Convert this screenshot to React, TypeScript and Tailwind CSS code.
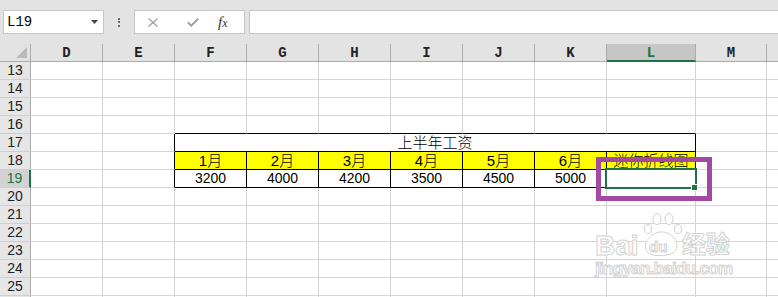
import React from 'react';
import clsx from 'clsx';

const COLS = ['D', 'E', 'F', 'G', 'H', 'I', 'J', 'K', 'L', 'M'] as const;
type Col = (typeof COLS)[number];
const W: Record<Col, string> = {
  D: 'w-[72px]',
  E: 'w-[72px]',
  F: 'w-[72px]',
  G: 'w-[72px]',
  H: 'w-[72px]',
  I: 'w-[72px]',
  J: 'w-[72px]',
  K: 'w-[72px]',
  L: 'w-[89px]',
  M: 'w-[71px]',
};
const TABLE: Col[] = ['F', 'G', 'H', 'I', 'J', 'K', 'L'];
const MONTHS: Partial<Record<Col, string>> = {
  F: '1月',
  G: '2月',
  H: '3月',
  I: '4月',
  J: '5月',
  K: '6月',
  L: '迷你折线图',
};
const VALUES: Partial<Record<Col, string>> = {
  F: '3200',
  G: '4000',
  H: '4200',
  I: '3500',
  J: '4500',
  K: '5000',
};
const ROWS = [13, 14, 15, 16, 17, 18, 19, 20, 21, 22, 23, 24, 25, 26];

function Cell({ r, c }: { r: number; c: Col }) {
  const inT = TABLE.includes(c);
  const rightBlack = (r >= 17 && r <= 19 && c === 'E') || (r >= 18 && r <= 19 && inT);
  const bottomBlack = r >= 16 && r <= 19 && inT;
  const yellow = r === 18 && inT;
  const text = r === 18 ? MONTHS[c] : r === 19 ? VALUES[c] : undefined;
  return (
    <div
      className={clsx(
        'flex h-[18px] shrink-0 items-center justify-center overflow-visible whitespace-nowrap border-r border-b text-black',
        W[c],
        rightBlack ? 'border-r-black' : 'border-r-[#d4d4d4]',
        bottomBlack ? 'border-b-black' : 'border-b-[#d4d4d4]',
        yellow ? 'bg-[#ffff00]' : 'bg-white',
        r === 18 ? 'text-[15px] font-light leading-[17px]' : 'text-[14px] leading-[17px]'
      )}
    >
      {text}
    </div>
  );
}

function RowHead({ r }: { r: number }) {
  const sel = r === 19;
  return (
    <div
      className={clsx(
        "flex h-[18px] w-[31px] shrink-0 items-center justify-center border-b border-b-[#cfcfcf] font-['Liberation_Sans',sans-serif] text-[14px] leading-[17px]",
        sel
          ? 'border-r-2 border-r-[#217346] bg-[#d2d2d2] text-[#217346]'
          : 'border-r border-r-[#ababab] bg-[#e6e6e6] text-[#222]'
      )}
    >
      {r < 26 ? r : ''}
    </div>
  );
}

function Row({ r }: { r: number }) {
  if (r === 17) {
    return (
      <div className="flex">
        <RowHead r={r} />
        <Cell r={r} c="D" />
        <Cell r={r} c="E" />
        <div className="flex h-[18px] w-[521px] shrink-0 items-center justify-center border-r border-b border-r-black border-b-black bg-white text-[15px] font-light leading-[17px] text-black">
          上半年工资
        </div>
        <Cell r={r} c="M" />
        <div className="h-[18px] flex-1 border-b border-b-[#d4d4d4] bg-white" />
      </div>
    );
  }
  return (
    <div className="flex">
      <RowHead r={r} />
      {COLS.map((c) => (
        <Cell key={c} r={r} c={c} />
      ))}
      <div className="h-[18px] flex-1 border-b border-b-[#d4d4d4] bg-white" />
    </div>
  );
}

function Watermark() {
  const st = { fill: '#ffffff', stroke: '#d2d2d2', strokeWidth: 1 } as const;
  return (
    <svg
      className="pointer-events-none absolute left-[592px] top-[208px]"
      width="150"
      height="74"
      viewBox="0 0 150 74"
    >
      <text x="3" y="47" fontFamily="Liberation Sans, sans-serif" fontWeight="700" fontSize="28" {...st}>
        Bai
      </text>
      <ellipse cx="56" cy="21" rx="3.5" ry="4.5" {...st} />
      <ellipse cx="65" cy="11" rx="4" ry="5.5" {...st} />
      <ellipse cx="77" cy="11" rx="4" ry="5.5" {...st} />
      <ellipse cx="86" cy="21" rx="3.5" ry="4.5" {...st} />
      <path d="M55 44 C50 36 58 25 68 24 C78 23 88 32 84 42 C82 48 60 50 55 44 Z" {...st} />
      <text x="57" y="44" fontFamily="Liberation Sans, sans-serif" fontWeight="700" fontSize="15" {...st}>
        du
      </text>
      <text x="90" y="45" fontFamily="Noto Sans CJK SC, sans-serif" fontWeight="700" fontSize="24" {...st}>
        经验
      </text>
      <text
        x="3"
        y="66"
        fontFamily="Liberation Sans, sans-serif"
        fontWeight="700"
        fontSize="17"
        textLength="138"
        {...st}
      >
        jingyan.baidu.com
      </text>
    </svg>
  );
}

export default function App() {
  return (
    <div className="relative h-[297px] w-[778px] overflow-hidden bg-white font-['Liberation_Sans','Noto_Sans_CJK_SC',sans-serif]">
      {/* formula bar */}
      <div className="flex h-[44px] items-start bg-[#e3e3e3] pt-[10px]">
        <div className="ml-[3px] flex h-[24px] w-[101px] items-center justify-between border border-[#c6c6c6] bg-white pl-[3px] pr-[5px]">
          <span className="font-['Liberation_Mono',monospace] text-[14px] leading-none text-black">L19</span>
          <svg width="7" height="4" viewBox="0 0 7 4">
            <path d="M0 0H7L3.5 4Z" fill="#444" />
          </svg>
        </div>
        <div className="flex h-[24px] w-[30px] flex-col items-center justify-center gap-[1.5px]">
          <div className="h-[2px] w-[2px] bg-[#6b6b6b]" />
          <div className="h-[2px] w-[2px] bg-[#6b6b6b]" />
          <div className="h-[2px] w-[2px] bg-[#6b6b6b]" />
        </div>
        <div className="flex h-[24px] w-[111px] items-center border border-[#c6c6c6] bg-white pl-[12px]">
          <svg width="12" height="9" viewBox="0 0 12 9">
            <path d="M1.5 0.5L10.5 8.5M10.5 0.5L1.5 8.5" stroke="#a0a0a0" strokeWidth="1.3" fill="none" />
          </svg>
          <svg className="ml-[28px]" width="12" height="9" viewBox="0 0 12 9">
            <path d="M0.8 4.2L4.2 7.6L11.2 0.8" stroke="#a0a0a0" strokeWidth="2" fill="none" />
          </svg>
          <span className="ml-[19px] font-['Liberation_Serif',serif] text-[15px] italic leading-none text-[#333]">
            f<span className="text-[12px]">x</span>
          </span>
        </div>
        <div className="ml-[4px] h-[24px] flex-1 border border-r-0 border-[#c6c6c6] bg-white" />
      </div>

      {/* column headers */}
      <div className="flex bg-[#e3e3e3]">
        <div className="flex h-[18px] w-[31px] shrink-0 items-end justify-end border-r border-b border-[#ababab] pr-[3px] pb-[3px]">
          <svg width="11" height="11" viewBox="0 0 11 11">
            <path d="M11 0L11 11L0 11Z" fill="#b9b9b9" />
          </svg>
        </div>
        {COLS.map((c) => (
          <div
            key={c}
            className={clsx(
              "flex h-[18px] shrink-0 items-center justify-center border-r border-r-[#ababab] pt-[1px] font-['Liberation_Mono',monospace] text-[14px] font-bold leading-none",
              W[c],
              c === 'L'
                ? 'border-b-2 border-b-[#217346] bg-[#c6c6c6] text-[#217346]'
                : 'border-b border-b-[#ababab] text-[#222]'
            )}
          >
            {c}
          </div>
        ))}
        <div className="h-[18px] flex-1 border-b border-b-[#ababab]" />
      </div>

      {/* grid */}
      <div className="flex flex-col">
        {ROWS.map((r) => (
          <Row key={r} r={r} />
        ))}
      </div>

      {/* selection */}
      <div className="pointer-events-none absolute left-[605px] top-[168px] h-[21px] w-[92px] border-2 border-[#217346]" />
      <div className="pointer-events-none absolute left-[691px] top-[184px] h-[7px] w-[7px] border border-white bg-[#217346]" />

      {/* purple highlight */}
      <div className="pointer-events-none absolute left-[596px] top-[157px] h-[44px] w-[116px] border-[5px] border-[#a349a4]" />

      <Watermark />
    </div>
  );
}
